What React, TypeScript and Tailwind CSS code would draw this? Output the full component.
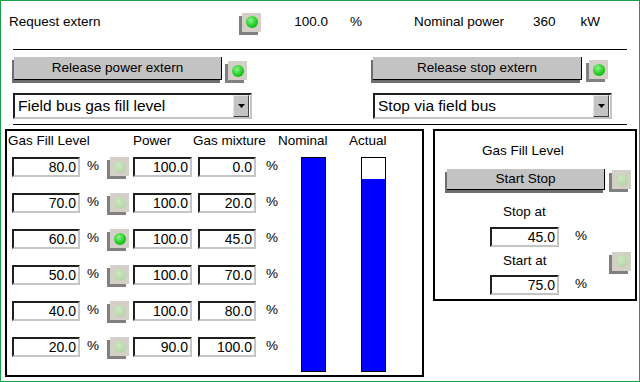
import React from 'react';

type Row = { level: string; on: boolean; power: string; gas: string };

const rows: Row[] = [
  { level: '80.0', on: false, power: '100.0', gas: '0.0' },
  { level: '70.0', on: false, power: '100.0', gas: '20.0' },
  { level: '60.0', on: true, power: '100.0', gas: '45.0' },
  { level: '50.0', on: false, power: '100.0', gas: '70.0' },
  { level: '40.0', on: false, power: '100.0', gas: '80.0' },
  { level: '20.0', on: false, power: '90.0', gas: '100.0' },
];

const Led: React.FC<{ on?: boolean; className?: string }> = ({ on, className = '' }) => (
  <div
    className={`w-[19px] h-[19px] shrink-0 bg-[#d4d0c8] shadow-[-3px_3px_0_#808080] flex items-center justify-center ${className}`}
  >
    <div
      className={`w-[12px] h-[12px] rounded-full ${
        on
          ? 'bg-[radial-gradient(circle_at_40%_35%,#8cf58c,#22cc22_55%,#0c9a0c)]'
          : 'bg-[radial-gradient(circle_at_40%_35%,#cfe6c4,#b9d8ab_60%,#acd09c)]'
      }`}
    />
  </div>
);

const Field: React.FC<{ value: string; className?: string }> = ({ value, className = '' }) => (
  <div
    className={`h-[20px] shrink-0 bg-white border-2 border-t-[#202020] border-l-[#202020] border-r-[#c4c4c4] border-b-[#c4c4c4] flex items-center justify-end pr-[2px] text-[14px] leading-none ${className}`}
  >
    {value}
  </div>
);

const Btn: React.FC<{ label: string; className?: string }> = ({ label, className = '' }) => (
  <div
    className={`shrink-0 bg-[#c3c3c3] border-r border-b border-black shadow-[-2px_3px_0_#6e6e6e] flex items-center justify-center ${className}`}
  >
    {label}
  </div>
);

const Drop: React.FC<{ label: string; className?: string }> = ({ label, className = '' }) => (
  <div
    className={`h-[26px] w-[239px] shrink-0 bg-white border-2 border-t-[#202020] border-l-[#202020] border-r-[#c4c4c4] border-b-[#c4c4c4] flex items-center ${className}`}
  >
    <span className="flex-1 pl-[3px] text-[15.5px] leading-none">{label}</span>
    <div className="w-[16px] h-[22px] mr-[1px] bg-[#c3c3c3] border border-t-[#e8e8e8] border-l-[#e8e8e8] border-r-[#404040] border-b-[#404040] flex items-center justify-center">
      <svg width="7" height="4" viewBox="0 0 7 4">
        <polygon points="0,0 7,0 3.5,4" fill="#000" />
      </svg>
    </div>
  </div>
);

const Bar: React.FC<{ pct: number; className?: string }> = ({ pct, className = '' }) => (
  <div className={`w-[25px] h-[215px] shrink-0 border border-black bg-white flex flex-col justify-end ${className}`}>
    <div className="bg-[#0000ff] w-full" style={{ height: `${pct}%` }} />
  </div>
);

export default function App() {
  return (
    <div className="w-[640px] h-[382px] border border-[#19a04b] bg-white overflow-hidden font-['Liberation_Sans',Arial,sans-serif] text-black text-[13.5px] leading-[16px]">
      {/* top status row */}
      <div className="flex items-center h-[24px] mt-[9px]">
        <span className="ml-[8px] w-[233px]">Request extern</span>
        <Led on />
        <span className="w-[67px] text-right">100.0</span>
        <span className="ml-[22px]">%</span>
        <span className="ml-[52px]">Nominal power</span>
        <span className="ml-[29px]">360</span>
        <span className="ml-[25px]">kW</span>
      </div>

      <div className="ml-[12px] mt-[15px] w-[614px] h-px bg-black" />

      {/* release buttons */}
      <div className="flex items-start mt-[7px]">
        <Btn label="Release power extern" className="ml-[13px] w-[208px] h-[23px]" />
        <Led on className="ml-[6px] mt-[4px]" />
        <Btn label="Release stop extern" className="ml-[126px] w-[209px] h-[23px]" />
        <Led on className="ml-[7px] mt-[3px]" />
      </div>

      {/* mode selects */}
      <div className="flex mt-[13px]">
        <Drop label="Field bus gas fill level" className="ml-[12px]" />
        <Drop label="Stop via field bus" className="ml-[121px]" />
      </div>

      <div className="ml-[12px] mt-[5px] w-[614px] h-px bg-black" />

      <div className="flex items-start mt-[4px]">
        {/* gas fill table */}
        <div className="ml-[4px] w-[419px] h-[248px] border-2 border-black shrink-0">
          <div className="flex items-center h-[20px]">
            <span className="ml-[1px] w-[125px]">Gas Fill Level</span>
            <span className="w-[60px]">Power</span>
            <span className="w-[85px]">Gas mixture</span>
            <span className="w-[71px]">Nominal</span>
            <span>Actual</span>
          </div>
          <div className="flex mt-[6px]">
            <div className="ml-[5px] flex flex-col gap-[16px]">
              {rows.map((r) => (
                <div key={r.level} className="flex items-start h-[20px]">
                  <Field value={r.level} className="w-[68px]" />
                  <span className="ml-[7px] w-[11px] mt-[1px]">%</span>
                  <Led on={r.on} className="ml-[12px]" />
                  <Field value={r.power} className="ml-[4px] w-[59px]" />
                  <Field value={r.gas} className="ml-[6px] w-[58px]" />
                  <span className="ml-[10px] w-[11px] mt-[1px]">%</span>
                </div>
              ))}
            </div>
            <Bar pct={100} className="ml-[24px]" />
            <Bar pct={90} className="ml-[35px]" />
          </div>
        </div>

        {/* start / stop panel */}
        <div className="ml-[9px] w-[204px] h-[172px] border-2 border-black shrink-0 flex flex-col">
          <span className="ml-[47px] mt-[12px]">Gas Fill Level</span>
          <div className="flex items-start mt-[10px]">
            <Btn label="Start Stop" className="ml-[12px] w-[158px] h-[21px]" />
            <Led className="ml-[7px] mt-[1px]" />
          </div>
          <span className="ml-[68px] mt-[14px]">Stop at</span>
          <div className="flex items-start mt-[7px]">
            <Field value="45.0" className="ml-[55px] w-[69px]" />
            <span className="ml-[16px] mt-[1px]">%</span>
          </div>
          <div className="flex items-center h-[20px] mt-[4px]">
            <span className="ml-[68px]">Start at</span>
            <Led className="ml-auto mr-[4px]" />
          </div>
          <div className="flex items-start mt-[4px]">
            <Field value="75.0" className="ml-[55px] w-[69px]" />
            <span className="ml-[16px] mt-[1px]">%</span>
          </div>
        </div>
      </div>
    </div>
  );
}
